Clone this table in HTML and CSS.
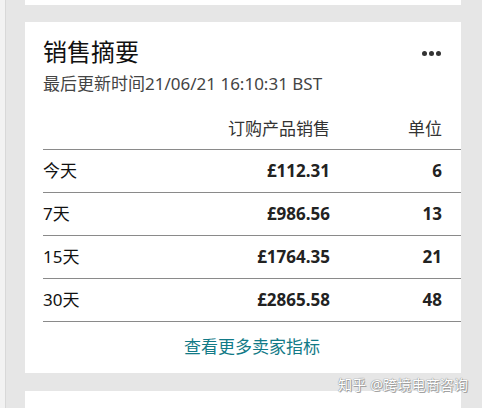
FILE: index.html
```html
<!DOCTYPE html>
<html lang="zh">
<head>
<meta charset="utf-8">
<title>销售摘要</title>
<link rel="stylesheet" href="styles.css">
</head>
<body>
<div class="page">
  <div class="strip"></div>
  <div class="column">
    <div class="card card-top"></div>
    <section class="card summary">
      <header class="head">
        <div>
          <h1 class="title">销售摘要</h1>
          <p class="updated">最后更新时间21/06/21 16:10:31 BST</p>
        </div>
        <div class="more"><span></span><span></span><span></span></div>
      </header>
      <div class="table">
        <div class="row row-head">
          <span></span>
          <span class="num">订购产品销售</span>
          <span class="num">单位</span>
        </div>
        <div class="row">
          <span>今天</span>
          <span class="num strong">£112.31</span>
          <span class="num strong">6</span>
        </div>
        <div class="row">
          <span>7天</span>
          <span class="num strong">£986.56</span>
          <span class="num strong">13</span>
        </div>
        <div class="row">
          <span>15天</span>
          <span class="num strong">£1764.35</span>
          <span class="num strong">21</span>
        </div>
        <div class="row">
          <span>30天</span>
          <span class="num strong">£2865.58</span>
          <span class="num strong">48</span>
        </div>
        <a class="link" href="#">查看更多卖家指标</a>
      </div>
    </section>
    <div class="card card-bottom"></div>
  </div>
</div>
<div class="watermark">知乎 @跨境电商咨询</div>
</body>
</html>
```

FILE: styles.css
```css
html, body {
  margin: 0;
  padding: 0;
}
body {
  width: 482px;
  height: 408px;
  overflow: hidden;
  background: #e6e6e6;
  font-family: "Noto Sans", "Noto Sans CJK SC", sans-serif;
  color: #111;
  position: relative;
}
.page {
  display: flex;
  height: 408px;
}
.strip {
  width: 5px;
  background: #f2f2f2;
  border-right: 1px solid #d8d8d8;
}
.column {
  flex: 1;
  padding: 0 21px 0 19px;
  display: flex;
  flex-direction: column;
  gap: 17px;
}
.card {
  background: #fff;
}
.card-top {
  height: 5px;
}
.card-bottom {
  flex: 1;
  margin-top: 1px;
}
.summary {
  padding-top: 14px;
}
.head {
  display: flex;
  justify-content: space-between;
  padding: 0 20px 0 18px;
}
.title {
  margin: 0;
  font-size: 24px;
  line-height: 32px;
  font-weight: 400;
  color: #111;
}
.updated {
  margin: 5px 0 0;
  font-size: 17px;
  line-height: 22px;
  color: #444;
}
.more {
  display: flex;
  gap: 2px;
  padding-top: 15px;
}
.more span {
  width: 5px;
  height: 5px;
  border-radius: 50%;
  background: #333;
}
.table {
  margin: 23px 0 0 18px;
}
.row {
  display: grid;
  grid-template-columns: 1fr 150px 112px;
  padding-right: 19px;
  font-size: 17px;
  line-height: 42px;
  border-bottom: 1px solid #8a8a8a;
}
.row-head {
  line-height: 22px;
  padding-bottom: 9px;
  color: #333;
}
.num {
  text-align: right;
}
.strong {
  font-weight: 700;
  color: #222;
}
.link {
  display: block;
  text-align: center;
  font-size: 17px;
  line-height: 22px;
  padding: 14px 0 15px;
  color: #127a87;
  text-decoration: none;
}
.watermark {
  position: absolute;
  left: 338px;
  top: 376px;
  font-size: 14px;
  line-height: 18px;
  color: #fff;
  text-shadow: 0 0 1px #888, 0 0 1px #888, 1px 1px 0 #aaa;
  letter-spacing: 0.2px;
}
```
